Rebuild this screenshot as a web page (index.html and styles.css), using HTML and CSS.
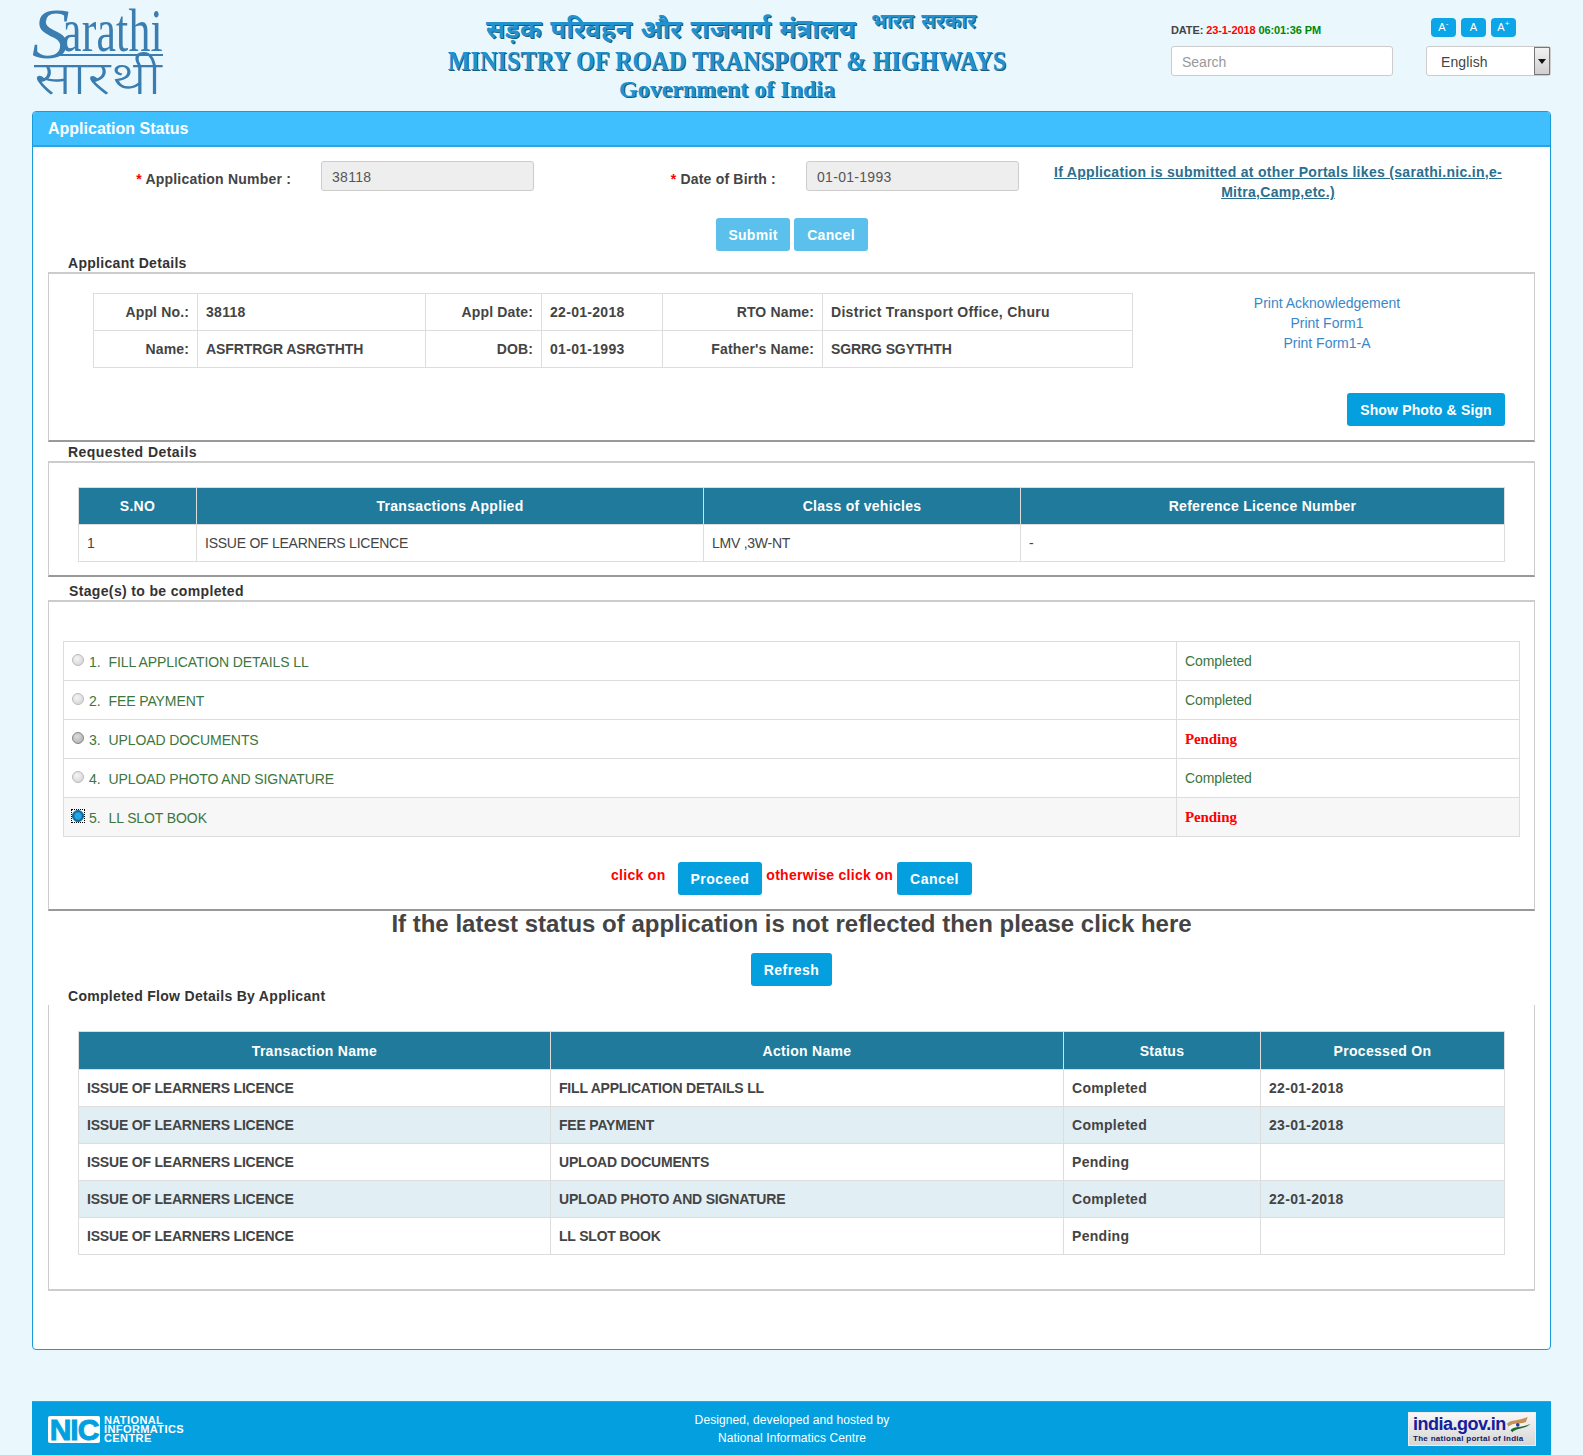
FILE: index.html
```html
<!DOCTYPE html>
<html lang="en">
<head>
  <meta charset="UTF-8" />
  <title>Application Status</title>
  <link rel="stylesheet" href="styles.css">
</head>
<body>

  <header class="top">
    <svg class="logo" width="132" height="92" viewBox="0 0 132 92">
      <text class="logo-s" x="0" y="50" textLength="38" lengthAdjust="spacingAndGlyphs">S</text>
      <text class="logo-en" x="30" y="43" textLength="101" lengthAdjust="spacingAndGlyphs">arathi</text>
      <line class="logo-rule" x1="28" y1="47" x2="131" y2="47" />
      <text class="logo-hi" x="2" y="86" textLength="128" lengthAdjust="spacingAndGlyphs">सारथी</text>
    </svg>

    <div class="title">
      <div class="title-hi">सड़क परिवहन और राजमार्ग मंत्रालय <span class="title-hi-sm">भारत सरकार</span></div>
      <div class="title-en"><span>MINISTRY OF ROAD TRANSPORT &amp; HIGHWAYS</span></div>
      <div class="title-gov">Government of India</div>
    </div>

    <div class="tools">
      <div class="date">DATE: <span class="red">23-1-2018</span> <span class="green">06:01:36 PM</span></div>
      <input class="search" type="text" placeholder="Search" />
    </div>

    <div class="tools-right">
      <div class="font-btns">
        <a class="font-btn">A<sup>-</sup></a>
        <a class="font-btn">A</a>
        <a class="font-btn">A<sup>+</sup></a>
      </div>
      <div class="lang">
        <span>English</span>
        <span class="lang-arrow"></span>
      </div>
    </div>
  </header>

  <main class="panel">
    <div class="panel-head">Application Status</div>

    <div class="search-row">
      <label class="lbl lbl-app"><span class="red">*</span> Application Number :</label>
      <input class="field" type="text" value="38118" readonly />
      <label class="lbl lbl-dob"><span class="red">*</span> Date of Birth :</label>
      <input class="field" type="text" value="01-01-1993" readonly />
      <a class="portal-link">If Application is submitted at other Portals likes (sarathi.nic.in,e-Mitra,Camp,etc.)</a>
    </div>

    <div class="form-btns">
      <button class="btn btn-light">Submit</button>
      <button class="btn btn-light">Cancel</button>
    </div>

    <h4 class="sec-title">Applicant Details</h4>
    <section class="box box-applicant">
      <table class="tbl tbl-applicant">
        <colgroup>
          <col class="a1"><col class="a2"><col class="a3"><col class="a4"><col class="a5"><col class="a6">
        </colgroup>
        <tr>
          <th>Appl No.:</th><td>38118</td>
          <th>Appl Date:</th><td>22-01-2018</td>
          <th>RTO Name:</th><td>District Transport Office, Churu</td>
        </tr>
        <tr>
          <th>Name:</th><td class="caps">ASFRTRGR ASRGTHTH</td>
          <th>DOB:</th><td>01-01-1993</td>
          <th>Father's Name:</th><td class="caps">SGRRG SGYTHTH</td>
        </tr>
      </table>
      <div class="side">
        <a>Print Acknowledgement</a>
        <a>Print Form1</a>
        <a>Print Form1-A</a>
        <button class="btn btn-photo">Show Photo &amp; Sign</button>
      </div>
    </section>

    <h4 class="sec-title sec-req">Requested Details</h4>
    <section class="box box-requested">
      <table class="tbl tbl-data">
        <colgroup>
          <col class="r1"><col class="r2"><col class="r3"><col class="r4">
        </colgroup>
        <thead>
          <tr><th>S.NO</th><th>Transactions Applied</th><th>Class of vehicles</th><th>Reference Licence Number</th></tr>
        </thead>
        <tbody class="plain">
          <tr><td>1</td><td>ISSUE OF LEARNERS LICENCE</td><td>LMV ,3W-NT</td><td>-</td></tr>
        </tbody>
      </table>
    </section>

    <h4 class="sec-title sec-stage">Stage(s) to be completed</h4>
    <section class="box box-stages">
      <table class="tbl tbl-stages">
        <colgroup><col class="s1"><col class="s2"></colgroup>
        <tr>
          <td class="stage"><span class="dot"></span>1.<span class="stage-name">FILL APPLICATION DETAILS LL</span></td>
          <td class="done">Completed</td>
        </tr>
        <tr>
          <td class="stage"><span class="dot"></span>2.<span class="stage-name">FEE PAYMENT</span></td>
          <td class="done">Completed</td>
        </tr>
        <tr>
          <td class="stage"><span class="dot dot-dark"></span>3.<span class="stage-name">UPLOAD DOCUMENTS</span></td>
          <td class="pending">Pending</td>
        </tr>
        <tr>
          <td class="stage"><span class="dot"></span>4.<span class="stage-name">UPLOAD PHOTO AND SIGNATURE</span></td>
          <td class="done">Completed</td>
        </tr>
        <tr class="current">
          <td class="stage"><span class="dot dot-on"></span>5.<span class="stage-name">LL SLOT BOOK</span></td>
          <td class="pending">Pending</td>
        </tr>
      </table>
      <div class="proceed-row">
        <span class="click-text click-first">click on</span>
        <button class="btn btn-blue">Proceed</button>
        <span class="click-text">otherwise click on</span>
        <button class="btn btn-blue">Cancel</button>
      </div>
    </section>

    <h2 class="refresh-title">If the latest status of application is not reflected then please click here</h2>
    <div class="refresh-row"><button class="btn btn-blue">Refresh</button></div>

    <h4 class="sec-title sec-flow">Completed Flow Details By Applicant</h4>
    <section class="box box-flow">
      <table class="tbl tbl-data tbl-flow">
        <colgroup>
          <col class="f1"><col class="f2"><col class="f3"><col class="f4">
        </colgroup>
        <thead>
          <tr><th>Transaction Name</th><th>Action Name</th><th>Status</th><th>Processed On</th></tr>
        </thead>
        <tbody>
          <tr><td>ISSUE OF LEARNERS LICENCE</td><td>FILL APPLICATION DETAILS LL</td><td>Completed</td><td>22-01-2018</td></tr>
          <tr><td>ISSUE OF LEARNERS LICENCE</td><td>FEE PAYMENT</td><td>Completed</td><td>23-01-2018</td></tr>
          <tr><td>ISSUE OF LEARNERS LICENCE</td><td>UPLOAD DOCUMENTS</td><td>Pending</td><td></td></tr>
          <tr><td>ISSUE OF LEARNERS LICENCE</td><td>UPLOAD PHOTO AND SIGNATURE</td><td>Completed</td><td>22-01-2018</td></tr>
          <tr><td>ISSUE OF LEARNERS LICENCE</td><td>LL SLOT BOOK</td><td>Pending</td><td></td></tr>
        </tbody>
      </table>
    </section>
  </main>

  <footer class="foot">
    <div class="nic">
      <span class="nic-mark">NIC</span>
      <span class="nic-name">NATIONAL<br>INFORMATICS<br>CENTRE</span>
    </div>
    <div class="foot-text">Designed, developed and hosted by<br>National Informatics Centre</div>
    <div class="india">
      <div class="india-top">
        <span class="india-name">india.gov.in</span>
        <svg width="28" height="18" viewBox="0 0 28 18">
          <path d="M1 9 C7 3 12 7 24 1 L22 7 C14 10 8 7 3 12 Z" fill="#c9915a" />
          <path d="M3 12 C8 7 14 10 22 7 L20 11 C14 13 9 11 5 15 Z" fill="#f4f4f0" />
          <path d="M5 16 C9 11 15 14 27 9 C20 15 12 13 7 18 Z" fill="#1d6b2a" />
          <circle cx="13" cy="10" r="2" fill="#2a3f8f" />
        </svg>
      </div>
      <div class="india-sub">The national portal of India</div>
    </div>
  </footer>

</body>
</html>
```

FILE: styles.css
```css
body {
  margin: 0;
  background-color: #eaf8fe;
  font-family: "Liberation Sans", Arial, sans-serif;
  font-size: 14px;
  color: #444;
  letter-spacing: 0.3px;
}
.red { color: #f00; }
.green { color: #080; }

/* header */
.top {
  display: flex;
  height: 111px;
  padding: 0 32px;
}
.logo {
  margin-top: 8px;
  flex: none;
  overflow: visible;
}
.logo-s {
  font-family: "Liberation Serif", serif;
  font-style: italic;
  font-size: 72px;
  fill: #3a7db0;
}
.logo-en {
  font-family: "Liberation Serif", serif;
  font-size: 62px;
  fill: #3a7db0;
}
.logo-hi {
  font-family: "Noto Sans", "DejaVu Sans", sans-serif;
  font-size: 46px;
  font-weight: 300;
  fill: #3a7db0;
}
.logo-rule {
  stroke: #3a7db0;
  stroke-width: 2;
}
.title {
  width: 640px;
  margin-left: 243px;
  padding-top: 2px;
  flex: none;
  text-align: center;
  font-family: "Liberation Serif", serif;
  font-weight: bold;
  color: #2391cd;
  letter-spacing: 0;
  text-shadow: 1px 1px 0 #175c80;
}
.title-hi {
  height: 44px;
  padding-left: 8px;
  font-family: "Noto Sans", sans-serif;
  font-size: 26px;
  line-height: 38px;
  word-spacing: 2px;
  white-space: nowrap;
}
.title-hi-sm {
  margin-left: 7px;
  font-size: 20px;
  vertical-align: 10px;
}
.title-en {
  line-height: 30px;
  white-space: nowrap;
}
.title-en span {
  display: inline-block;
  font-size: 24px;
  letter-spacing: 0.15px;
  transform: scale(1, 1.15);
}
.title-gov {
  margin-top: -4px;
  font-size: 24px;
  line-height: 26px;
}
.tools {
  width: 222px;
  margin-left: 124px;
  padding-top: 23px;
  flex: none;
}
.date {
  height: 23px;
  font-size: 11px;
  font-weight: bold;
  letter-spacing: -0.1px;
  line-height: 15px;
}
.search {
  width: 222px;
  height: 30px;
  box-sizing: border-box;
  padding: 2px 10px 0;
  border: 1px solid #ccc;
  border-radius: 3px;
  background: #fff;
  font-family: inherit;
  font-size: 14px;
}
.search::placeholder { color: #999; }
.tools-right {
  width: 125px;
  margin-left: 33px;
  padding-top: 18px;
  flex: none;
}
.font-btns {
  display: flex;
  gap: 5px;
  height: 28px;
  padding-left: 5px;
}
.font-btn {
  width: 25px;
  height: 19px;
  border-radius: 4px;
  background-color: #0ba5e8;
  color: #fff;
  font-size: 11px;
  line-height: 19px;
  text-align: center;
}
.font-btn sup {
  font-size: 8px;
  line-height: 0;
}
.lang {
  display: flex;
  justify-content: space-between;
  height: 30px;
  box-sizing: border-box;
  padding-left: 14px;
  border: 1px solid #ccc;
  border-radius: 3px;
  background: #fff;
  letter-spacing: 0.1px;
  line-height: 30px;
}
.lang-arrow {
  width: 16px;
  background: linear-gradient(#f2f2f2, #cfcfcf);
  border: 1px solid #777;
  box-sizing: border-box;
  position: relative;
}
.lang-arrow::after {
  content: "";
  position: absolute;
  left: 3px;
  top: 11px;
  border: 4px solid transparent;
  border-top: 5px solid #111;
}

/* main panel */
.panel {
  height: 1239px;
  margin: 0 32px;
  box-sizing: border-box;
  border: 1px solid #1a9bd7;
  border-radius: 4px;
  background-color: #fff;
}
.panel-head {
  height: 33px;
  padding-left: 15px;
  border-bottom: 2px solid #2da3df;
  border-radius: 3px 3px 0 0;
  background-color: #40bfff;
  color: #fff;
  font-size: 16px;
  font-weight: bold;
  letter-spacing: 0;
  line-height: 33px;
}
.search-row {
  display: flex;
  align-items: flex-start;
  height: 71px;
  padding-top: 14px;
  box-sizing: border-box;
}
.lbl {
  flex: none;
  padding-top: 10px;
  font-weight: bold;
  letter-spacing: 0.2px;
  text-align: right;
}
.lbl-app { width: 258px; margin-right: 30px; }
.lbl-dob { width: 242px; margin-right: 30px; }
.field {
  flex: none;
  width: 213px;
  height: 30px;
  box-sizing: border-box;
  padding: 2px 10px 0;
  border: 1px solid #ccc;
  border-radius: 3px;
  background-color: #eee;
  color: #555;
  font-family: inherit;
  font-size: 14px;
  letter-spacing: 0.3px;
}
.portal-link {
  flex: none;
  width: 450px;
  margin: 1px 0 0 34px;
  color: #2a6f8f;
  font-weight: bold;
  line-height: 20px;
  text-align: center;
  text-decoration: underline;
}
.form-btns {
  display: flex;
  gap: 4px;
  height: 33px;
  padding-left: 683px;
}
.btn {
  height: 33px;
  padding: 0 13px;
  border: none;
  border-radius: 3px;
  color: #fff;
  font-family: inherit;
  font-size: 14px;
  font-weight: bold;
  letter-spacing: 0.5px;
}
.btn-light {
  width: 74px;
  padding: 0;
  background-color: #5bc0eb;
  letter-spacing: 0.3px;
}
.btn-blue, .btn-photo { background-color: #039fdf; }

.sec-title {
  margin: 0 0 0 35px;
  height: 21px;
  padding-top: 4px;
  box-sizing: border-box;
  font-size: 14px;
  line-height: 17px;
  color: #333;
}
.sec-req { padding-top: 2px; height: 19px; letter-spacing: 0.45px; }
.sec-stage { padding-top: 6px; height: 23px; margin-left: 36px; letter-spacing: 0.35px; }
.box {
  margin: 0 15px;
  box-sizing: border-box;
  border: 1px solid #ccc;
  border-top-width: 2px;
  border-bottom: 2px solid #999;
}

/* tables */
.tbl {
  border-collapse: collapse;
  table-layout: fixed;
}
.tbl td, .tbl th {
  border: 1px solid #ddd;
  padding: 0 8px;
}
.box-applicant {
  display: flex;
  height: 170px;
  padding: 19px 0 0 44px;
}
.tbl-applicant { width: 1039px; height: 75px; flex: none; align-self: flex-start; }
.a1 { width: 104px; }
.a2 { width: 228px; }
.a3 { width: 116px; }
.a4 { width: 121px; }
.a5 { width: 160px; }
.a6 { width: 310px; }
.tbl-applicant th { text-align: right; font-weight: bold; letter-spacing: 0.15px; }
.tbl-applicant td { font-weight: bold; }
.tbl-applicant .caps { letter-spacing: -0.1px; }
.side {
  display: flex;
  flex-direction: column;
  align-items: center;
  flex: 1;
  padding-right: 13px;
  line-height: 20px;
  color: #3a87c8;
  letter-spacing: 0;
}
.side a { display: block; }
.btn-photo {
  align-self: flex-end;
  width: 158px;
  padding: 0;
  margin: 40px 16px 0 0;
  letter-spacing: 0.15px;
}
.box-requested {
  height: 116px;
  padding: 24px 0 0 29px;
}
.tbl-data { width: 1426px; }
.tbl-data thead th {
  height: 36px;
  background-color: #1f7a9c;
  color: #fff;
  border-color: #ddd;
  font-weight: bold;
}
.tbl-data td { height: 36px; }
.plain td {
  font-weight: normal;
  letter-spacing: -0.25px;
}
.r1 { width: 118px; }
.r2 { width: 507px; }
.r3 { width: 317px; }
.r4 { width: 484px; }

.box-stages {
  height: 311px;
  padding: 39px 0 0 14px;
}
.tbl-stages { width: 1456px; }
.s1 { width: 1113px; }
.s2 { width: 343px; }
.tbl-stages td { height: 38px; color: #3c763d; letter-spacing: -0.1px; }
.tbl-stages .stage { padding-top: 3px; height: 35px; }
.current td { background-color: #f7f7f7; }
.dot {
  display: inline-block;
  position: relative;
  width: 12px;
  height: 12px;
  margin: 0 5px 5px 0;
  vertical-align: middle;
  border-radius: 50%;
  border: 1px solid #bbb;
  box-sizing: border-box;
  background: radial-gradient(circle at 40% 35%, #f4f4f4, #d0d0d0);
}
.dot-dark {
  border-color: #888;
  background: radial-gradient(circle at 40% 35%, #ddd, #aaa);
}
.dot-on {
  border-color: #0d6b9e;
  background: radial-gradient(circle, #22a7e6 40%, #0d5f8f 70%);
}
.dot-on::after {
  content: "";
  position: absolute;
  top: -2px;
  right: -2px;
  bottom: -2px;
  left: -2px;
  border: 1px dotted #000;
}
.stage-name { margin-left: 8px; }
.tbl-stages .pending {
  color: #f00;
  font-family: "Liberation Serif", serif;
  font-size: 15px;
  font-weight: bold;
}
.proceed-row {
  display: flex;
  gap: 4px;
  margin-top: 25px;
  padding-left: 548px;
}
.click-text {
  color: #f00;
  font-weight: bold;
  line-height: 26px;
}
.click-first { margin-right: 8px; }

.refresh-title {
  margin: 0;
  height: 42px;
  font-size: 24px;
  line-height: 25px;
  text-align: center;
  letter-spacing: 0;
}
.refresh-row {
  height: 33px;
  text-align: center;
}
.sec-flow { padding-top: 2px; height: 19px; }
.box-flow {
  height: 286px;
  padding: 26px 0 0 29px;
  border-top: none;
  border-bottom-color: #ccc;
}
.tbl-flow thead th { height: 37px; }
.tbl-flow td { font-weight: bold; }
.tbl-flow td:nth-child(-n+2) { letter-spacing: -0.2px; }
.tbl-flow tbody tr:nth-child(even) td { background-color: #e1eef4; }
.f1 { width: 472px; }
.f2 { width: 513px; }
.f3 { width: 197px; }
.f4 { width: 244px; }

/* footer */
.foot {
  display: flex;
  align-items: center;
  justify-content: space-between;
  height: 55px;
  margin: 51px 32px 0;
  box-sizing: border-box;
  padding: 0 15px 0 16px;
  border-top: 1px solid #18aef0;
  background-color: #039fdf;
  color: #fff;
}
.nic {
  display: flex;
  align-items: center;
  gap: 4px;
  width: 128px;
}
.nic-mark {
  flex: none;
  width: 52px;
  height: 27px;
  border-radius: 2px;
  background-color: #fff;
  color: #039fdf;
  font-size: 30px;
  font-weight: bold;
  line-height: 27px;
  letter-spacing: -1px;
  text-align: center;
  -webkit-text-stroke: 1px #039fdf;
}
.nic-name {
  flex: none;
  font-size: 11px;
  font-weight: bold;
  line-height: 9px;
  letter-spacing: 0.4px;
}
.foot-text {
  font-size: 12px;
  line-height: 18px;
  letter-spacing: 0.1px;
  text-align: center;
}
.india {
  width: 128px;
  height: 34px;
  box-sizing: border-box;
  padding: 1px 4px;
  background: linear-gradient(#f7f7f7, #d6d6d6);
  border: 1px solid #eee;
  color: #14209a;
}
.india-top {
  display: flex;
  align-items: center;
  justify-content: space-between;
  height: 20px;
}
.india-name {
  font-size: 18px;
  font-weight: bold;
  letter-spacing: -0.5px;
}
.india-sub {
  font-size: 8px;
  font-weight: bold;
  line-height: 10px;
  color: #111a66;
}
```
